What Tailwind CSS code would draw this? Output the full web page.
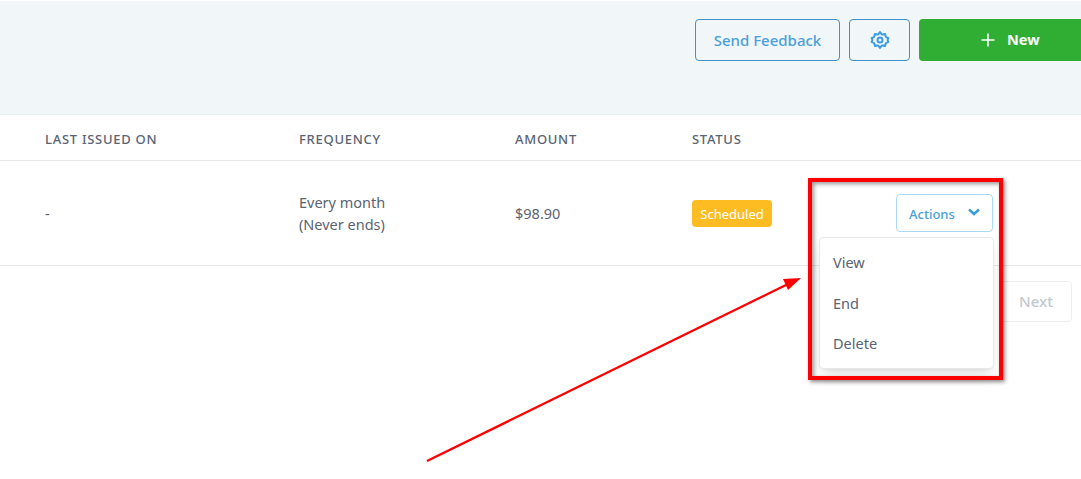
<!DOCTYPE html>
<html>
<head>
<meta charset="utf-8">
<script src="https://cdn.jsdelivr.net/npm/@tailwindcss/browser@4"></script>
</head>
<body class="bg-white">
<div class="relative w-[1081px] h-[479px] overflow-hidden bg-white font-['Noto_Sans','Open_Sans',sans-serif] text-[#5a6372]">
  <header class="h-[114px] mt-px bg-[#f1f6f9] border-b border-[#e9eef1] flex items-start justify-end pt-[18px] gap-[9px] -mb-px">
    <button class="h-[42px] w-[145px] rounded border border-[#3f91c9] text-[#4a9fdc] text-[15px] font-medium">Send Feedback</button>
    <button class="h-[42px] w-[61px] rounded border border-[#3f91c9] flex items-center justify-center text-[#3b9ddd]">
      <svg class="w-5 h-5" viewBox="0 0 24 24" fill="none" stroke="currentColor" stroke-width="2.4" stroke-linecap="round" stroke-linejoin="round"><circle cx="12" cy="12" r="3"/><path d="M12 2.5l1.6 2.2a1.8 1.8 0 0 0 1.9.7l2.6-.6.6 2.7c.2.7.7 1.2 1.4 1.4l1.9.6-.9 2.5 .9 2.5-2 .7a2 2 0 0 0-1.3 1.3l-.6 2.7-2.6-.6a1.8 1.8 0 0 0-1.9.7L12 21.5l-1.6-2.2a1.8 1.8 0 0 0-1.9-.7l-2.6.6-.6-2.7a2 2 0 0 0-1.3-1.3l-2-.7.9-2.5-.9-2.5 1.9-.6c.7-.2 1.2-.7 1.4-1.4l.6-2.7 2.6.6a1.8 1.8 0 0 0 1.9-.7z"/></svg>
    </button>
    <button class="h-[42px] w-[162px] rounded-l bg-[#2fae33] text-white text-[14.5px] font-bold flex items-center pl-[61px] gap-[11px]">
      <svg class="w-4 h-4" viewBox="0 0 16 16" fill="none" stroke="currentColor" stroke-width="1.6"><path d="M8 1.5v13M1.5 8h13"/></svg>
      New
    </button>
  </header>

  <div class="h-[46px] mt-px pt-[5px] border-b border-[#e5e7eb] grid grid-cols-[299px_216px_177px_1fr] items-center text-[13px] font-medium tracking-[0.72px] text-[#596373]">
    <div class="pl-[45px]">LAST ISSUED ON</div>
    <div>FREQUENCY</div>
    <div>AMOUNT</div>
    <div>STATUS</div>
  </div>

  <div class="h-[105px] border-b border-[#e5e7eb] grid grid-cols-[299px_216px_177px_204px_1fr] items-center text-[14.5px] text-[#5a6372]">
    <div class="pl-[45px] pt-[2px]">-</div>
    <div class="leading-[22px]">Every month<br>(Never ends)</div>
    <div class="pt-[2px]">$98.90</div>
    <div><span class="inline-flex items-center justify-center w-[80px] h-[27px] pt-[4px] rounded bg-[#fdbd22] text-white text-[13px]">Scheduled</span></div>
    <div>
      <button class="h-[38px] w-[97px] pt-[4px] rounded border border-[#a9daf5] text-[#4a9fdc] text-[13px] font-medium flex items-center pl-3 gap-[13px]">
        Actions
        <svg class="w-3 h-2 -mt-[6px]" viewBox="0 0 12 8" fill="none" stroke="#3b9ddd" stroke-width="2.6"><path d="M1 1.5l5 4.5 5-4.5"/></svg>
      </button>
    </div>
  </div>

  <div class="flex justify-end pr-[9px] pt-[15px]">
    <button class="h-[41px] w-[72px] rounded border border-[#eceef1] text-[#c4c8ce] text-[15px] font-medium">Next</button>
  </div>

  <!-- dropdown menu over the table -->
  <div class="absolute left-[819px] top-[237px] w-[175px] h-[132px] rounded bg-white border border-[#e5e7eb] shadow-lg py-[4px] text-[14.5px] text-[#5a6372]">
    <div class="h-[41px] pl-[13px] flex items-center">View</div>
    <div class="h-[41px] pl-[13px] flex items-center">End</div>
    <div class="h-[40px] pl-[13px] flex items-center">Delete</div>
  </div>

  <!-- annotation: red rectangle -->
  <div class="absolute left-[808px] top-[178px] w-[195px] h-[202px] border-4 border-[#ff0000] shadow-[2px_2px_4px_rgba(0,0,0,0.45),inset_2px_2px_4px_rgba(0,0,0,0.4)]"></div>

  <!-- annotation: red arrow -->
  <svg class="absolute left-0 top-0 w-[1081px] h-[479px] pointer-events-none" viewBox="0 0 1081 479" fill="none">
    <path d="M427 461L788 284" stroke="#ff0000" stroke-width="2.4"/>
    <path d="M801 278L783 279L788 290Z" fill="#ff0000"/>
  </svg>
</div>
</body>
</html>
